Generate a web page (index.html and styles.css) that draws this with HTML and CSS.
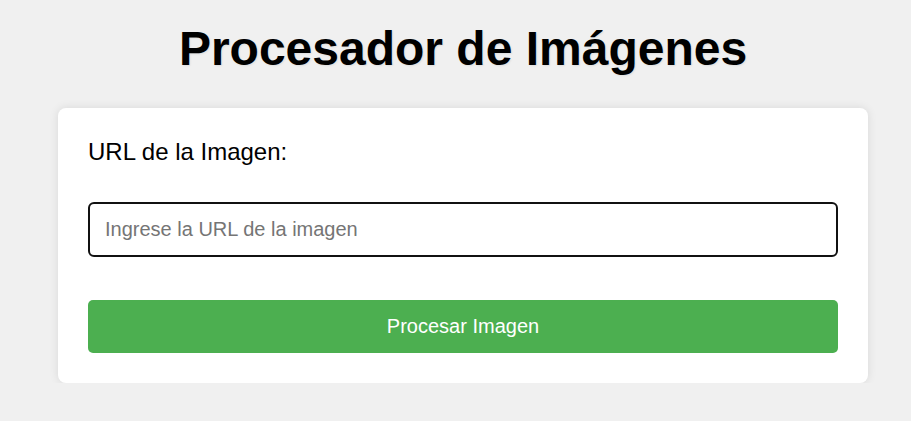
FILE: index.html
```html
<!DOCTYPE html>
<html lang="es">
<head>
<meta charset="utf-8">
<title>Procesador de Imágenes</title>
<link rel="stylesheet" href="styles.css">
</head>
<body>
<main class="page">
  <h1 class="title">Procesador de Imágenes</h1>
  <form class="card">
    <label class="label" for="url">URL de la Imagen:</label>
    <input class="input" id="url" type="text" placeholder="Ingrese la URL de la imagen">
    <button class="button" type="button">Procesar Imagen</button>
  </form>
</main>
</body>
</html>
```
FILE: styles.css
```css
* { box-sizing: border-box; }
html, body { margin: 0; }
body {
  background: #f0f0f0;
  font-family: "Liberation Sans", Arial, sans-serif;
  color: #000;
  padding: 0 0 0 15px;
}
.page {
  width: 810px;
  margin: 0 auto;
}
.title {
  margin: 21px 0 32px;
  font-size: 48px;
  font-weight: bold;
  text-align: center;
  line-height: normal;
  text-shadow: 1px 1px 2px rgba(0,0,0,0.08);
}
.card {
  background: #fff;
  border-radius: 8px;
  box-shadow: 0 0 10px rgba(0,0,0,0.1);
  padding: 30px;
  display: flex;
  flex-direction: column;
}
.label {
  font-size: 24px;
  line-height: normal;
  margin-bottom: 36px;
}
.input {
  height: 55px;
  padding: 0 15px;
  font-family: inherit;
  font-size: 20px;
  border: 2.5px solid #111;
  border-radius: 6px;
  outline: none;
  margin-bottom: 43px;
  color: #000;
}
.input::placeholder { color: #757575; }
.button {
  height: 53px;
  border: none;
  border-radius: 5px;
  background: #4caf50;
  color: #fff;
  font-family: inherit;
  font-size: 20px;
  cursor: pointer;
}
```
